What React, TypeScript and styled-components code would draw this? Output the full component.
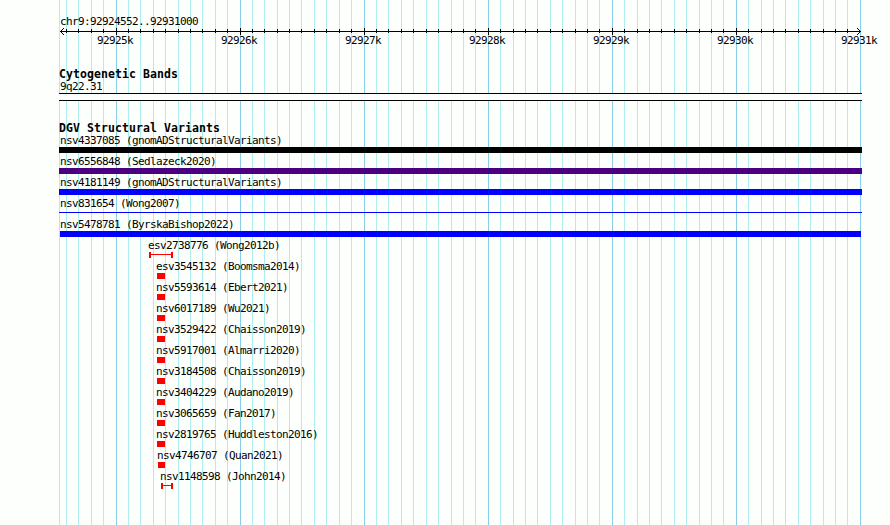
import React from "react";
import styled, { createGlobalStyle } from "styled-components";

const GlobalStyle = createGlobalStyle`
  body {
    margin: 0;
    background: #fdfffc;
  }
`;

const WIDTH = 890;
const HEIGHT = 525;
const AXIS_Y = 31;
const MAJOR = [116, 240, 364, 488, 612, 736, 860];
const MINOR = [
  ...[66, 78, 91, 103],
  ...[128, 140, 153, 165, 178, 190, 202, 215, 227],
  ...[252, 264, 277, 289, 301, 314, 326, 339, 351],
  ...[376, 388, 401, 413, 426, 438, 451, 463, 475],
  ...[500, 513, 525, 537, 550, 562, 575, 587, 599],
  ...[624, 637, 649, 661, 674, 686, 699, 711, 723],
  ...[748, 761, 773, 785, 798, 810, 823, 835, 847]
];

const Browser = styled.main`
  position: relative;
  width: ${WIDTH}px;
  height: ${HEIGHT}px;
  overflow: hidden;
  background: #fdfffc;
  color: #000;
  font-family: "DejaVu Sans Mono", "Liberation Mono", monospace;
  font-size: 11px;
`;

const Grid = styled.svg`
  position: absolute;
  top: 0;
  left: 0;
`;

const Content = styled.div`
  position: relative;
  width: 803px;
  padding: 15px 0 0 59px;
`;

const Label = styled.div<{ $x?: number }>`
  height: 13px;
  margin-left: ${props => props.$x ?? 1}px;
  line-height: 13px;
  letter-spacing: -0.622px;
  white-space: pre;
`;

const Scale = styled.div`
  display: grid;
  grid-template-columns: repeat(7, 124px);
  margin: 6px 0 0 38px;
`;

const Track = styled.section`
  padding-top: 21px;
`;

const Headline = styled.h3`
  height: 12px;
  margin: 0;
  font-size: 11.5px;
  font-weight: bold;
  line-height: 13px;
  letter-spacing: 0.077px;
  white-space: pre;
`;

const Cytoband = styled.div`
  box-sizing: border-box;
  height: 8px;
  border: solid #000;
  border-width: 1px 0;
  background: #fdfffc;
`;

const Feature = styled.div`
  display: flow-root;
  height: 21px;
`;

const Block = styled.div<{ $x: number; $width: number; $color: string }>`
  width: ${props => props.$width}px;
  height: 6px;
  margin-left: ${props => props.$x}px;
  background: ${props => props.$color};
`;

const Line = styled.div<{ $color: string }>`
  height: 1px;
  margin-top: 2px;
  background: ${props => props.$color};
`;

const Span = styled.div<{ $x: number; $width: number }>`
  box-sizing: border-box;
  width: ${props => props.$width}px;
  height: 6px;
  margin-left: ${props => props.$x}px;
  padding-top: 2px;
  border: solid #f00;
  border-width: 0 2px;

  &::before {
    content: "";
    display: block;
    height: 1px;
    background: #f00;
  }
`;

type Variant = {
  name: string;
  x: number;
  width: number;
  color?: string;
  shape?: "block" | "line" | "span";
  labelX?: number;
};

const VARIANTS: Variant[] = [
  { name: "nsv4337085 (gnomADStructuralVariants)", x: 0, width: 803, color: "#000", labelX: 1 },
  { name: "nsv6556848 (Sedlazeck2020)", x: 0, width: 803, color: "#4b0082", labelX: 1 },
  { name: "nsv4181149 (gnomADStructuralVariants)", x: 0, width: 803, color: "#00f", labelX: 1 },
  { name: "nsv831654 (Wong2007)", x: 0, width: 803, color: "#00f", shape: "line", labelX: 1 },
  { name: "nsv5478781 (ByrskaBishop2022)", x: 1, width: 801, color: "#00f", labelX: 1 },
  { name: "esv2738776 (Wong2012b)", x: 90, width: 24, shape: "span" },
  { name: "esv3545132 (Boomsma2014)", x: 98, width: 8 },
  { name: "nsv5593614 (Ebert2021)", x: 98, width: 8 },
  { name: "nsv6017189 (Wu2021)", x: 98, width: 8 },
  { name: "nsv3529422 (Chaisson2019)", x: 98, width: 8 },
  { name: "nsv5917001 (Almarri2020)", x: 98, width: 8 },
  { name: "nsv3184508 (Chaisson2019)", x: 98, width: 8 },
  { name: "nsv3404229 (Audano2019)", x: 98, width: 8 },
  { name: "nsv3065659 (Fan2017)", x: 98, width: 8 },
  { name: "nsv2819765 (Huddleston2016)", x: 98, width: 8 },
  { name: "nsv4746707 (Quan2021)", x: 99, width: 7 },
  { name: "nsv1148598 (John2014)", x: 102, width: 12, shape: "span" }
];

const GridLines = () => (
  <Grid width={WIDTH} height={HEIGHT} shapeRendering="crispEdges">
    {[59, ...MINOR].map(x => (
      <rect key={x} x={x} y={0} width={1} height={HEIGHT} fill="#afeeee" />
    ))}
    {MAJOR.map(x => (
      <rect key={x} x={x} y={0} width={1} height={HEIGHT} fill="#87ceeb" />
    ))}
    <rect x={60} y={AXIS_Y} width={801} height={1} />
    {MINOR.map(x => (
      <rect key={x} x={x} y={AXIS_Y - 2} width={1} height={4} />
    ))}
    {MAJOR.slice(0, -1).map(x => (
      <rect key={x} x={x} y={AXIS_Y - 3} width={1} height={7} />
    ))}
    {[1, 2, 3].map(i => (
      <React.Fragment key={i}>
        <rect x={60 + i} y={AXIS_Y - i} width={1} height={1} />
        <rect x={60 + i} y={AXIS_Y + i} width={1} height={1} />
        <rect x={860 - i} y={AXIS_Y - i} width={1} height={1} />
        <rect x={860 - i} y={AXIS_Y + i} width={1} height={1} />
      </React.Fragment>
    ))}
  </Grid>
);

const Glyph = ({ variant }: { variant: Variant }) => {
  const { x, width, color = "#f00", shape } = variant;
  if (shape === "line") {
    return <Line $color={color} />;
  }
  if (shape === "span") {
    return <Span $x={x} $width={width} />;
  }
  return <Block $x={x} $width={width} $color={color} />;
};

const App = () => (
  <>
    <GlobalStyle />
    <Browser>
      <GridLines />
      <Content>
        <Label>chr9:92924552..92931000</Label>
        <Scale>
          {MAJOR.map((x, i) => (
            <Label key={x} $x={0}>
              {92925 + i}k
            </Label>
          ))}
        </Scale>
        <Track>
          <Headline>Cytogenetic Bands</Headline>
          <Label>9q22.31</Label>
          <Cytoband />
        </Track>
        <Track>
          <Headline>DGV Structural Variants</Headline>
          {VARIANTS.map(variant => (
            <Feature key={variant.name}>
              <Label $x={variant.labelX ?? variant.x - 1}>{variant.name}</Label>
              <Glyph variant={variant} />
            </Feature>
          ))}
        </Track>
      </Content>
    </Browser>
  </>
);

export default App;
